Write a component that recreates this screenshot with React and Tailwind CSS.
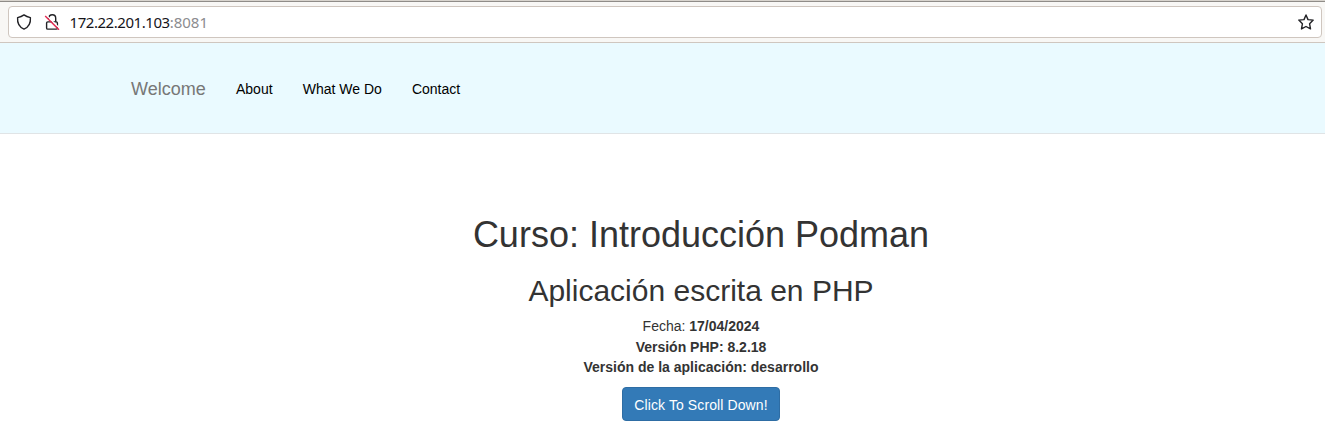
import React from 'react';

function ShieldIcon() {
  return (
    <svg className="size-4" viewBox="0 0 16 16" fill="none" stroke="#222226" strokeWidth="1.4" strokeLinejoin="round">
      <path d="M8 .9C6.200 2.300 3.800 3.200 1.600 3.600C1.200 8.500 2.800 12.900 8 15.100C13.200 12.900 14.800 8.500 14.400 3.600C12.200 3.200 9.800 2.300 8 .9Z" />
    </svg>
  );
}

function InsecureLockIcon() {
  return (
    <svg className="size-4" viewBox="0 0 16 16" fill="none">
      <path d="M4.900 5V4.200a3.400 3.400 0 0 1 6.800 0v3.600" stroke="#222226" strokeWidth="1.4" />
      <rect x="2.600" y="7.900" width="10.800" height="7.200" rx="1.200" stroke="#222226" strokeWidth="1.400" />
      <path d="M2.400 1.200L15.700 14.500" stroke="#fff" strokeWidth="1.400" />
      <path d="M1.200 2L15 15.800" stroke="#e22850" strokeWidth="1.400" />
    </svg>
  );
}

function StarIcon() {
  return (
    <svg className="size-4" viewBox="0 0 16 16" fill="none" stroke="#222226" strokeWidth="1.400" strokeLinejoin="round">
      <path d="M8 1L10 5.600L15.200 6.100L11.600 9.800L12.500 14.900L8 12.500L3.500 14.900L4.400 9.800L.8 6.100L6 5.600Z" />
    </svg>
  );
}

function AddressBar() {
  return (
    <div className="flex h-[43px] w-[1325px] border-t border-b border-t-[#d8d4ce] border-b-[#cfc6bf] bg-[#f8f7f5]">
      <div className="flex w-full border-t border-t-[#8f8c88] px-[8px] pt-[4px] pr-[3px]">
        <div className="flex h-8 w-full items-center rounded-[4px] border border-[#cfc6bf] bg-white pr-[7px] pl-[7px]">
          <ShieldIcon />
          <div className="ml-3 flex"><InsecureLockIcon /></div>
          <div className="ml-[9.500px] flex-1 pb-px font-['Noto_Sans',sans-serif] text-[15px] leading-5 text-[#15141a]">
            <span className="tracking-[-0.45px]">172.22.201.103</span>
            <span className="text-[#8c8c8f]">:8081</span>
          </div>
          <StarIcon />
        </div>
      </div>
    </div>
  );
}

export default function App() {
  return (
    <div className="h-[448px] w-full overflow-hidden bg-white font-['Liberation_Sans',sans-serif] text-sm text-[#333]">
      <AddressBar />
      <div className="w-[1402px]">
        <nav className="h-[91px] border-b border-[#e0e4e6] bg-[#eafaff]">
          <div className="mx-auto flex h-[92px] w-[1140px] items-center text-black">
            <a className="mr-[30.300px] text-[18px] leading-5 text-[#777]">Welcome</a>
            <div className="flex gap-[30.100px] leading-5">
              <a>About</a>
              <a>What We Do</a>
              <a>Contact</a>
            </div>
          </div>
        </nav>
        <section className="flex flex-col items-center pt-[81px] text-center">
          <h1 className="text-[36px] leading-[40px]">Curso: Introducción Podman</h1>
          <h2 className="mt-[19px] text-[30px] leading-[33px]">Aplicación escrita en PHP</h2>
          <p className="mt-[9px] leading-[20.500px]">
            Fecha: <b>17/04/2024</b><br />
            <b>Versión PHP: 8.2.18</b><br />
            <b>Versión de la aplicación: desarrollo</b>
          </p>
          <button className="mt-[9px] h-[34px] w-[158px] rounded-[4px] border border-[#2e6da4] bg-[#337ab7] pt-0.5 leading-5 tracking-[0.1px] text-white">
            Click To Scroll Down!
          </button>
        </section>
      </div>
    </div>
  );
}
